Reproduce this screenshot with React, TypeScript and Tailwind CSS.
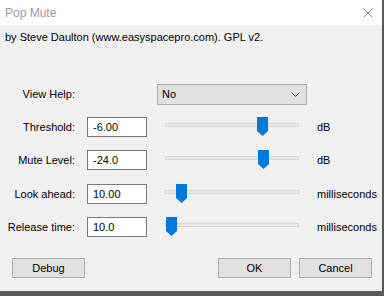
import React from "react";

const font = { fontFamily: '"Liberation Sans", Arial, sans-serif' };

function Thumb() {
  return (
    <svg width="11" height="19" viewBox="0 0 11 19">
      <path d="M0 0 H11 V14 L5.5 19 L0 14 Z" fill="#0078d7" />
    </svg>
  );
}

function Slider({ pos }: { pos: number }) {
  return (
    <div className="relative w-[134px] h-[20px]">
      <div className="absolute left-0 right-0 top-[6px] h-[4px] bg-[#e7eae7] border border-[#d6d6d6]" />
      <div className="absolute top-0" style={{ left: pos }}>
        <Thumb />
      </div>
    </div>
  );
}

function Row({ label, value, pos, unit, mt }: { label: string; value: string; pos: number; unit: string; mt: string }) {
  return (
    <div className={`flex items-center h-[20px] ${mt}`}>
      <div className="w-[75px] text-right">{label}</div>
      <div className="ml-[12px] w-[60px] h-[20px] bg-white border border-[#7a7a7a] flex items-center pl-[5px]">{value}</div>
      <div className="ml-[18px]">
        <Slider pos={pos} />
      </div>
      <div className="ml-[18px]">{unit}</div>
    </div>
  );
}

export default function App() {
  return (
    <div className="w-[384px] h-[296px] bg-[#5a5a5a] text-[11px] text-black" style={font}>
      <div className="w-[382px] h-[291px] bg-[#f0f0f0] flex flex-col">
        <div className="h-[25px] bg-white flex items-center justify-between pl-[5px] pr-[9px]">
          <span className="text-[12px] text-[#9a9a9a]">Pop Mute</span>
          <svg width="10" height="10" viewBox="0 0 10 10">
            <path d="M0.5 0.5 L9.5 9.5 M9.5 0.5 L0.5 9.5" stroke="#808080" strokeWidth="1" />
          </svg>
        </div>
        <div className="pl-[5px] mt-[5px] h-[14px] leading-[14px]">by Steve Daulton (www.easyspacepro.com). GPL v2.</div>
        <div className="flex items-center h-[21px] mt-[40px]">
          <div className="w-[75px] text-right">View Help:</div>
          <div className="ml-[82px] w-[150px] h-[21px] bg-[#e1e1e1] border border-[#adadad] flex items-center justify-between pl-[4px] pr-[6px]">
            <span>No</span>
            <svg width="9" height="5" viewBox="0 0 9 5">
              <path d="M0.5 0.5 L4.5 4.5 L8.5 0.5" stroke="#444" fill="none" strokeWidth="1" />
            </svg>
          </div>
        </div>
        <Row label="Threshold:" value="-6.00" pos={92} unit="dB" mt="mt-[12px]" />
        <Row label="Mute Level:" value="-24.0" pos={93} unit="dB" mt="mt-[13px]" />
        <Row label="Look ahead:" value="10.00" pos={11} unit="milliseconds" mt="mt-[14px]" />
        <Row label="Release time:" value="10.0" pos={1} unit="milliseconds" mt="mt-[13px]" />
        <div className="flex mt-[21px] h-[20px]">
          <div className="ml-[12px] w-[73px] h-[20px] bg-[#e1e1e1] border border-[#adadad] flex items-center justify-center">
            <span>
              Debu<span className="underline">g</span>
            </span>
          </div>
          <div className="ml-[133px] w-[73px] h-[20px] bg-[#e1e1e1] border border-[#adadad] flex items-center justify-center">OK</div>
          <div className="ml-[8px] w-[73px] h-[20px] bg-[#e1e1e1] border border-[#adadad] flex items-center justify-center">Cancel</div>
        </div>
      </div>
    </div>
  );
}
